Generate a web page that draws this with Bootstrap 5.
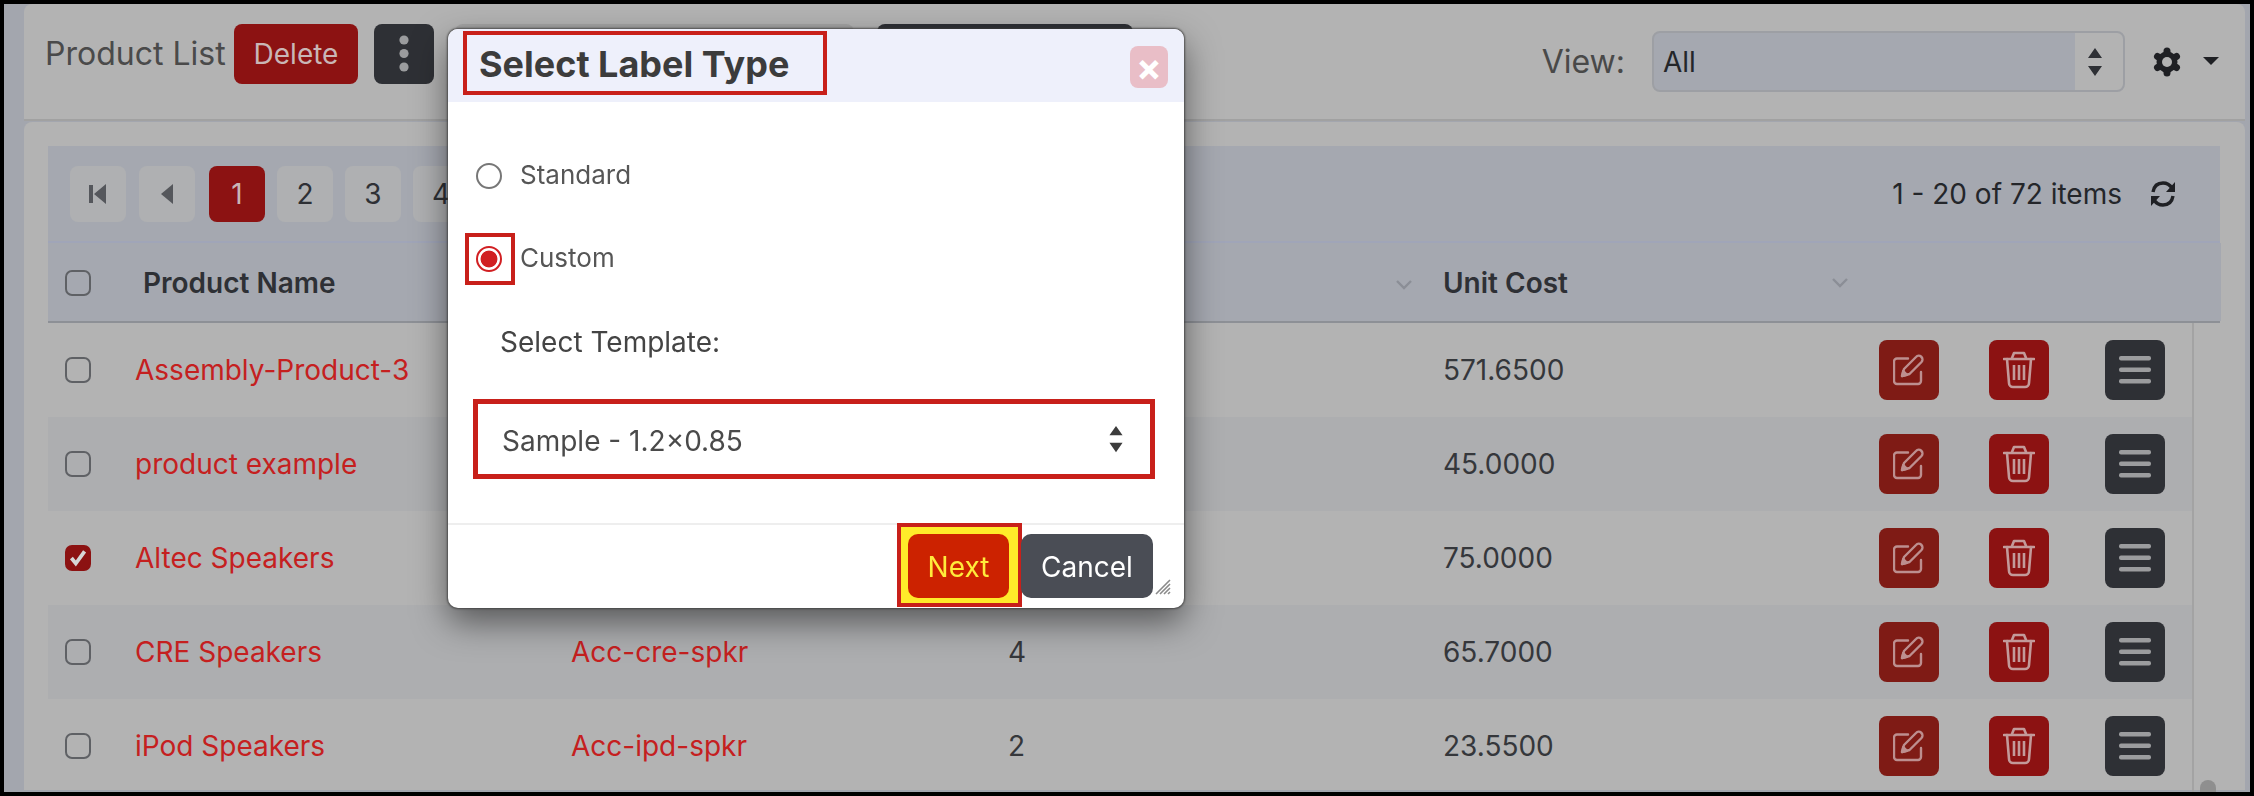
<!DOCTYPE html>
<html lang="en"><head><meta charset="utf-8"><title>Product List</title>
<link href="https://cdn.jsdelivr.net/npm/bootstrap@5.3.0/dist/css/bootstrap.min.css" rel="stylesheet">
<style>
html,body{height:796px;overflow:hidden}
body{font-family:Inter,"Liberation Sans",sans-serif;background:#000;color:#2e3035}
.shell{height:796px;border:4px solid #000;background:#a3a6ae;padding:0 5px 0 20px;overflow:hidden}
.top-bar{height:117px;background:#b3b3b3;border-bottom:2px solid #a1a1a1;border-radius:8px 8px 0 0;padding:20px 26px 0 21px}
.page-title{font-size:32px;line-height:60px;color:#4a4a4a;width:189px;flex:none}
.act{height:60px;border:0;border-radius:8px;font-size:28px;padding:0;display:inline-flex;align-items:center;justify-content:center}
.act-red{background:#8c1212;color:#c9b6b6}
.act-dark{background:#2e3035;color:#9b9c9e}
.act-wine{background:#7f1b15}
.act-grey{background:#a3a3a3}
.view-lbl{font-size:32px;color:#494949;line-height:61px;margin-top:7px;margin-right:27px}
.view-sel{width:473px;height:61px;margin-top:7px;border:2px solid #9d9fa4;border-radius:8px;font-size:28px;color:#24262a;padding:0 0 0 9px;
 background-color:#a5a8b0;
 background-image:url("data:image/svg+xml,%3Csvg xmlns='http://www.w3.org/2000/svg' viewBox='0 0 16 32'%3E%3Cpath fill='%232e3035' d='M8 2l7 10H1zM8 30L1 20h14z'/%3E%3C/svg%3E"),linear-gradient(#b3b3b3,#b3b3b3);
 background-repeat:no-repeat;background-position:right 20px center,right center;background-size:16px 32px,48px 100%}
.list-pane{height:668px;background:#b3b3b3;margin-top:1px;border-radius:8px 8px 0 0;padding:24px 25px 0 24px}
.grid-tools{height:97px;background:#a5a8b0;border-bottom:2px solid #a0a5b8;padding:0 43px 0 22px}
.pg{width:56px;height:56px;background:#afb0b2;border-radius:8px;font-size:28px;color:#2e3035;margin-right:12px;flex:none}
.pg.on{background:#8c1212;color:#c9b6b6}
.pg-count{font-size:28px;color:#24262a;margin-right:27px}
.grid-table{table-layout:fixed;width:2145px;margin:0;background:transparent;--bs-table-bg:transparent;--bs-table-color:#35373b}
.grid-table td,.grid-table th{padding:0;border:0;vertical-align:middle;font-size:28px;font-weight:400;background:transparent;box-shadow:none}
.head-row{height:78px;background:#a5a8b0}
.head-wrap{border-bottom:2px solid #8d9096;background:#a5a8b0}
.grid-table .head-row th{font-weight:600;color:#2e3035;font-size:28px;padding-top:2px}
.grid-table .head-row .h-name{padding-left:8px}
.row-ht{height:93.5px}
.row-alt{background:#adaeb0}
.grid-table a{color:#c5201f;text-decoration:none}
.grid-table .chk{padding-left:17px}
.tick{width:26px;height:26px;margin:0;background-color:transparent;border:2px solid #5f6165;border-radius:5px;display:block}
.tick:checked{background-color:#8c1212;border-color:#8c1212;background-image:url("data:image/svg+xml,%3Csvg xmlns='http://www.w3.org/2000/svg' viewBox='0 0 20 20'%3E%3Cpath fill='none' stroke='%23d6d6d6' stroke-width='3.4' d='M4 10l4 5 8-11'/%3E%3C/svg%3E")}
.sort-cell svg{margin-left:388px}
.unit-cost{display:flex;align-items:center}
.body-wrap{height:470px;overflow:hidden}
.track{width:28px;border-left:2px solid #a3a3a3;height:470px;position:relative}
.thumb{position:absolute;left:6px;top:457px;width:16px;height:30px;border-radius:8px;background:#8f8f8f}
.row-btns{display:flex;align-items:center}
.sq{width:60px;height:60px;flex:none}
.lbl-dialog{max-width:736px!important;margin:29px 0 0 448px!important}
.lbl-box{height:579px;border:0;border-radius:10px;box-shadow:0 0 2px 1px rgba(60,60,60,.8),0 14px 34px rgba(0,0,0,.5);overflow:visible;background:#fff}
.lbl-head{height:73px;background:#eef0fb;border:0;border-radius:10px 10px 0 0;padding:2px 16px 0 15px;align-items:flex-start}
.mark-box{border:4px solid #c8201a}
.lbl-title{width:364px;height:64px;margin:0;font-size:36px;line-height:58px;font-weight:700;color:#3c3c3c;padding-left:12px}
.lbl-x{width:38px;height:42px;margin-top:15px;border:0;background:#e9bec7;border-radius:8px;color:#fff;font-size:38px;font-weight:700;line-height:1;padding:0}
.lbl-body{padding:48px 30px 0 17px;height:421px;flex:none}
.opt{height:52px;margin-bottom:31px}
.opt-mark{width:50px;height:52px;border:4px solid transparent;display:flex;align-items:center;justify-content:center;margin-right:5px;padding-right:2px}
.opt-mark.mark-box{border-color:#c8201a}
.opt-radio{width:26px;height:26px;margin:0;border:2px solid #777;background-color:#fff}
.opt-radio:checked{border-color:#d11f22;background-color:#fff;background-image:radial-gradient(circle,#d11f22 0 8px,#fff 8.8px)}
.opt-lbl{font-size:26px;color:#565656;margin-top:-4px}
.tpl-lbl{font-size:28px;line-height:40px;color:#444;margin:37px 0 37px 35px}
.tpl-sel{margin-left:8px;width:682px;height:80px;border:5px solid #c8201a;border-radius:0;font-size:28px;color:#4a4a4a;padding:4px 0 0 24px;
 background-image:url("data:image/svg+xml,%3Csvg xmlns='http://www.w3.org/2000/svg' viewBox='0 0 16 32'%3E%3Cpath fill='%233c3c3c' d='M8 2l7 10H1zM8 30L1 20h14z'/%3E%3C/svg%3E");background-size:16px 30px;background-position:right 26px center}
.lbl-foot{height:85px;border-top:2px solid #eee;padding:0 31px 0 0;flex-wrap:nowrap;position:relative;align-items:flex-start;gap:0;border-radius:0 0 10px 10px}
.mark-next{width:125px;height:84px;margin:-2px -1px 0 0;padding:7px;border:4px solid #c8201a;background:#ffeb2a;flex:none}
.mark-next .btn{width:101px;height:64px;padding:2px 0 0;background:#cc2200;color:#ffeb3b;border:0;border-radius:10px;font-size:28px}
.btn-cancel{width:132px;height:64px;margin:9px 0 0 0;padding:2px 0 0;background:#4a4d55;color:#fff;border:0;border-radius:10px;font-size:28px}
.grip{position:absolute;right:9px;bottom:9px}
</style></head>
<body>
<div class="shell">
 <div class="top-bar d-flex">
  <span class="page-title">Product List</span>
  <button class="btn act act-red" style="width:124px">Delete</button>
  <button class="btn act act-dark ms-3" style="width:60px"><svg width="12" height="38" viewBox="0 0 12 38"><circle cx="6" cy="5" r="4.6" fill="#9b9c9e"/><circle cx="6" cy="18.500" r="4.600" fill="#9b9c9e"/><circle cx="6" cy="32" r="4.600" fill="#9b9c9e"/></svg></button>
  <button class="btn act act-grey" style="width:399px;margin-left:21px"></button>
  <button class="btn act act-dark" style="width:256px;margin-left:23px"></button>
  <div class="ms-auto d-flex">
   <span class="view-lbl">View:</span>
   <select class="form-select view-sel"><option>All</option></select>
   <svg style="margin-top:23px;margin-left:28px" width="28" height="30" viewBox="0 0 28 30"><g fill="none" stroke="#1f2024" stroke-width="7" stroke-linecap="round"><path d="M14 4v22M4.500 9.500l19 11M4.500 20.500l19-11"/></g><circle cx="14" cy="15" r="10.500" fill="#1f2024"/><circle cx="14" cy="15" r="5" fill="#b3b3b3"/></svg>
   <svg style="margin-top:33px;margin-left:22px" width="16" height="8" viewBox="0 0 16 8"><path fill="#1f2024" d="M0 0h16L8 8z"/></svg>
  </div>
 </div>
 <div class="list-pane">
  <div class="grid-tools d-flex align-items-center">
   <span class="pg d-flex align-items-center justify-content-center" style="margin-right:13px"><svg width="18" height="20" viewBox="0 0 18 20"><path fill="#55575c" d="M0 1h4v18H0zM17 0v20L5 10z"/></svg></span>
   <span class="pg d-flex align-items-center justify-content-center" style="margin-right:14px"><svg width="12" height="20" viewBox="0 0 12 20"><path fill="#55575c" d="M12 0v20L0 10z"/></svg></span>
   <span class="pg on d-flex align-items-center justify-content-center">1</span>
   <span class="pg d-flex align-items-center justify-content-center">2</span>
   <span class="pg d-flex align-items-center justify-content-center">3</span>
   <span class="pg d-flex align-items-center justify-content-center">4</span>
   <span class="pg-count ms-auto">1 - 20 of 72 items</span>
   <svg width="28" height="26" viewBox="0 0 28 26" fill="none" stroke="#1f2024" stroke-width="3.4"><path d="M4 11C5 5 9 2 14 2c4 0 7 2 9 5"/><path d="M24 15c-1 6-5 9-10 9-4 0-7-2-9-5"/><path fill="#1f2024" stroke="none" d="M26 1v10h-9zM2 25V15h9z"/></svg>
  </div>
  <div class="head-wrap">
  <table class="table grid-table" style="width:2173px">
   <colgroup><col style="width:87px"><col style="width:436px"><col style="width:437px"><col style="width:435px"><col style="width:436px"><col></colgroup>
   <thead><tr class="head-row">
    <th class="chk"><input class="form-check-input tick" type="checkbox" aria-label="Select all"></th>
    <th class="h-name">Product Name</th><th></th>
    <th class="sort-cell"><svg width="16" height="10" viewBox="0 0 16 10" fill="none" stroke="#8b8e96" stroke-width="2.400"><path d="M1 1l7 7 7-7"/></svg></th>
    <th><div class="unit-cost"><span>Unit Cost</span><svg style="margin-left:264px" width="16" height="10" viewBox="0 0 16 10" fill="none" stroke="#8b8e96" stroke-width="2.400"><path d="M1 1l7 7 7-7"/></svg></div></th>
    <th></th>
   </tr></thead>
  </table>
  </div>
  <div class="d-flex body-wrap">
   <table class="table grid-table">
    <colgroup><col style="width:87px"><col style="width:436px"><col style="width:437px"><col style="width:435px"><col style="width:436px"><col></colgroup>
    <tbody id="rows"></tbody>
   </table>
   <div class="track"><div class="thumb"></div></div>
  </div>
 </div>
</div>

<div class="modal d-block" tabindex="-1">
 <div class="modal-dialog lbl-dialog">
  <div class="modal-content lbl-box">
   <div class="modal-header lbl-head justify-content-between">
    <h5 class="modal-title lbl-title mark-box">Select Label Type</h5>
    <button class="lbl-x" aria-label="Close">×</button>
   </div>
   <div class="modal-body lbl-body">
    <div class="opt d-flex align-items-center"><span class="opt-mark"><input class="form-check-input opt-radio" type="radio" name="lt" id="r1"></span><label class="opt-lbl" for="r1">Standard</label></div>
    <div class="opt d-flex align-items-center"><span class="opt-mark mark-box"><input class="form-check-input opt-radio" type="radio" name="lt" id="r2" checked></span><label class="opt-lbl" for="r2">Custom</label></div>
    <div class="tpl-lbl">Select Template:</div>
    <select class="form-select tpl-sel"><option>Sample - 1.2×0.85</option></select>
   </div>
   <div class="modal-footer lbl-foot">
    <div class="mark-next"><button class="btn">Next</button></div>
    <button class="btn btn-cancel">Cancel</button>
    <svg class="grip" width="16" height="16" viewBox="0 0 16 16" stroke="#8a8a8a" stroke-width="1.600"><path d="M15 1L1 15M15 5L5 15M15 9l-6 6M15 13l-2 2"/></svg>
   </div>
  </div>
 </div>
</div>

<script>
var E='<svg width="32" height="32" viewBox="0 0 32 32" fill="none" stroke="#bd8f8f" stroke-width="2.400" stroke-linecap="round" stroke-linejoin="round"><path d="M15 4.500H4a3 3 0 0 0-3 3V27a3 3 0 0 0 3 3h21a3 3 0 0 0 3-3v-9"/><path d="M9 22l2-7L23 3a3.300 3.300 0 0 1 5.500 5L16.500 20z"/><path fill="#bd8f8f" d="M9 22l1.200-5 3.800 3.800z"/></svg>';
var T='<svg width="32" height="38" viewBox="0 0 32 38" fill="none" stroke="#c39a9a" stroke-width="2.600" stroke-linecap="round" stroke-linejoin="round"><path d="M1 8h30"/><path d="M9 7l2-5h10l2 5"/><path d="M4 8l2 24a4 4 0 0 0 4 4h12a4 4 0 0 0 4-4l2-24"/><path d="M11 14v15M16 14v15M21 14v15" stroke-linecap="butt"/></svg>';
var M='<svg width="32" height="28" viewBox="0 0 32 28" fill="#9b9c9e"><rect y="0" width="32" height="4.500" rx="2"/><rect y="11.500" width="32" height="4.500" rx="2"/><rect y="23" width="32" height="4.500" rx="2"/></svg>';
var R=[['Assembly-Product-3','','','571.6500',0,0],['product example','','','45.0000',1,0],['Altec Speakers','','','75.0000',0,1],['CRE Speakers','Acc-cre-spkr','4','65.7000',1,0],['iPod Speakers','Acc-ipd-spkr','2','23.5500',0,0]];
document.getElementById('rows').innerHTML=R.map(function(r){return '<tr class="row-ht'+(r[4]?' row-alt':'')+'"><td class="chk"><input class="form-check-input tick" type="checkbox" aria-label="Select row"'+(r[5]?' checked':'')+'></td><td><a href="#">'+r[0]+'</a></td><td><a href="#">'+r[1]+'</a></td><td>'+r[2]+'</td><td>'+r[3]+'</td><td><div class="row-btns"><span class="act act-wine sq">'+E+'</span><span class="act act-red sq" style="margin-left:50px">'+T+'</span><span class="act act-dark sq" style="margin-left:56px">'+M+'</span></div></td></tr>';}).join('');
</script>
<script src="https://cdn.jsdelivr.net/npm/bootstrap@5.3.0/dist/js/bootstrap.bundle.min.js"></script>
</body></html>
